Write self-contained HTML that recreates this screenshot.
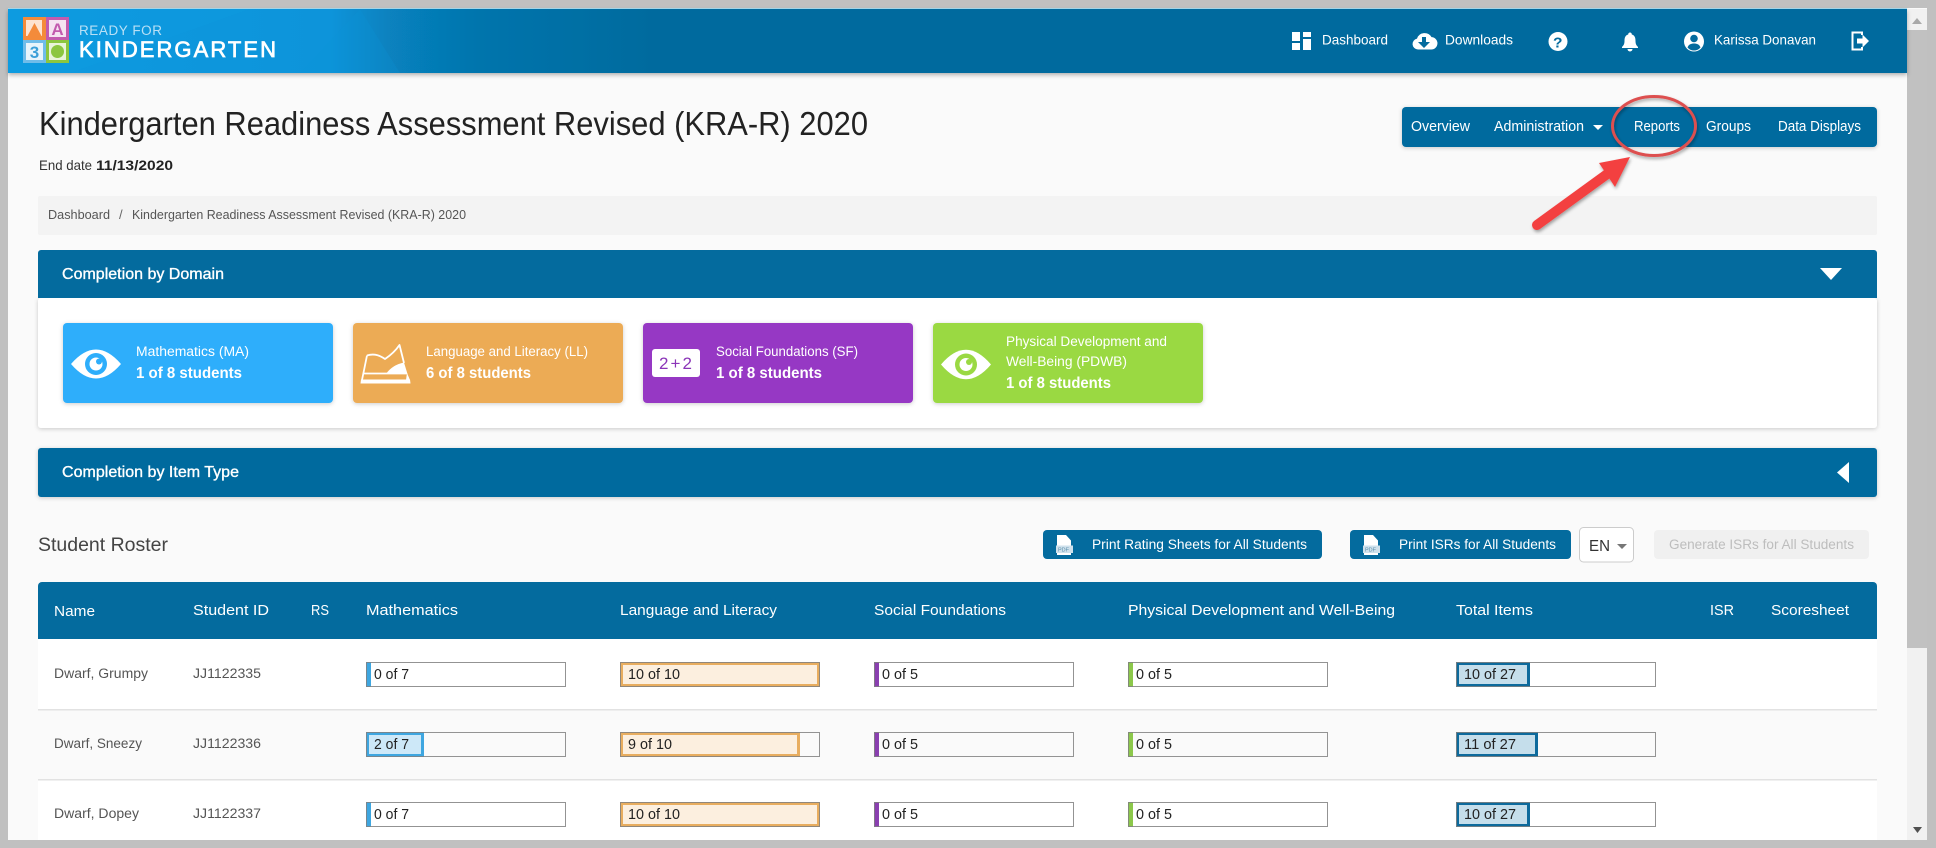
<!DOCTYPE html>
<html lang="en"><head><meta charset="utf-8"><title>Kindergarten Readiness Assessment Revised (KRA-R) 2020</title>
<style>
html,body{margin:0;padding:0;background:#c0c0c0;width:1936px;height:848px;overflow:hidden}
svg{display:block;font-family:"Liberation Sans",Arial,sans-serif}
.w{fill:#fff}
.n{font-size:14px;fill:#fff}
.h{font-size:14.5px;fill:#fff}
.s{font-size:16px;fill:#fff;stroke:#fff;stroke-width:.35px}
.c{font-size:13.5px;fill:#fff}
.b{font-size:16px;fill:#fff;font-weight:bold}
.r{font-size:13.5px;fill:#555}
.p{font-size:14.5px;fill:#222}
.t{font-size:15px;fill:#fff}
.btn{font-size:13.5px;fill:#fff}
</style></head><body>
<svg xmlns="http://www.w3.org/2000/svg" width="1936" height="848" viewBox="0 0 1936 848">
<defs>
<linearGradient id="hg" gradientUnits="userSpaceOnUse" x1="8" y1="0" x2="1907" y2="0"><stop offset="0" stop-color="#0a9ae0"/><stop offset=".17" stop-color="#0a94da"/><stop offset=".2" stop-color="#0782bf"/><stop offset=".25" stop-color="#0574ac"/><stop offset=".34" stop-color="#046b9e"/><stop offset="1" stop-color="#046b9e"/></linearGradient>
<filter id="sh" x="-5%" y="-20%" width="110%" height="150%"><feDropShadow dx="0" dy="2" stdDeviation="2" flood-color="#000" flood-opacity=".3"/></filter>
<filter id="cs" x="-10%" y="-20%" width="120%" height="140%"><feDropShadow dx="0" dy="1" stdDeviation="2" flood-color="#000" flood-opacity=".2"/></filter>
<filter id="rs" x="-20%" y="-20%" width="140%" height="140%"><feDropShadow dx="1" dy="2" stdDeviation="1.500" flood-color="#000" flood-opacity=".35"/></filter>
</defs>

<rect x="8" y="8" width="1919" height="832" fill="#fafafa"/>
<rect x="8" y="8" width="1899" height="1" fill="#a8dcf0"/>

<!-- scrollbar -->
<rect x="1907" y="9" width="20" height="831" fill="#f1f1f1"/>
<rect x="1907" y="30" width="20" height="618" fill="#c1c1c1"/>
<path d="M1917 18l-5 6h10z" fill="#a9a9a9"/>
<path d="M1913 827h9l-4.500 6z" fill="#505050"/>

<!-- header -->
<rect x="8" y="9" width="1899" height="64" fill="url(#hg)" filter="url(#sh)"/>
<path d="M70 73L250 9H8V73Z" fill="#12a2e6" opacity=".18"/>
<path d="M360 9L400 73H300Z" fill="#0a92d6" opacity=".25"/>
<!-- logo -->
<rect x="23" y="17" width="23" height="23" fill="#f48b3a"/><rect x="26" y="20" width="16" height="16" fill="#fde3cf"/><path d="M27.500 36L34.500 23L41.500 36Z" fill="#f48b3a"/>
<rect x="46" y="17" width="23" height="23" fill="#c25bae"/><rect x="49" y="20" width="17" height="17" fill="#f5e3f1"/>
<text x="57.500" y="35" font-size="17" font-weight="bold" fill="#c25bae" text-anchor="middle">A</text>
<rect x="23" y="40" width="23" height="23" fill="#6fbce9"/><rect x="26" y="43" width="17" height="17" fill="#e8f4fb"/>
<text x="34.500" y="58" font-size="17" font-weight="bold" fill="#3b9fd8" text-anchor="middle">3</text>
<rect x="46" y="40" width="23" height="23" fill="#8cc63f"/><rect x="49" y="43" width="17" height="17" fill="#e9f4d8"/><circle cx="57.500" cy="51.500" r="6.500" fill="#8cc63f"/>
<text x="79" y="35" font-size="13.500" fill="#b8e0f6" textLength="83" lengthAdjust="spacing">READY FOR</text>
<text x="79" y="57" font-size="22" fill="#fff" stroke="#fff" stroke-width=".7" textLength="197" lengthAdjust="spacing">KINDERGARTEN</text>

<!-- header right -->
<g class="w">
<rect x="1292" y="32" width="8" height="9"/><rect x="1303" y="32" width="8" height="5"/><rect x="1303" y="39" width="8" height="11"/><rect x="1292" y="43" width="8" height="7"/>
<path d="M1418 49.500a5.500 5.500 0 0 1-1-10.900a8 8 0 0 1 14.500-1.500a6.200 6.200 0 0 1-.5 12.400z"/>
<path d="M1422 37h4v5h4l-6 6-6-6h4z" fill="#046b9e"/>
<circle cx="1558" cy="41.500" r="9.500"/>
<path d="M1630 32.500a1.800 1.800 0 0 1 1.800 2c3 .8 3.700 3.300 3.700 6.500c0 3 1 4.500 2.500 6v1h-16v-1c1.500-1.500 2.500-3 2.500-6c0-3.200.7-5.700 3.700-6.500a1.800 1.800 0 0 1 1.800-2z"/>
<path d="M1627.500 49h5a2.500 2.500 0 0 1-5 0z"/>
<circle cx="1694" cy="41.500" r="10"/>
</g>
<text x="1322" y="44.500" class="n" textLength="66" lengthAdjust="spacingAndGlyphs">Dashboard</text>
<text x="1445" y="44.500" class="n" textLength="68" lengthAdjust="spacingAndGlyphs">Downloads</text>
<text x="1553" y="47.500" font-size="15" font-weight="bold" fill="#046b9e" textLength="9.500" lengthAdjust="spacingAndGlyphs">?</text>
<circle cx="1694" cy="38.500" r="3.800" fill="#046b9e"/>
<path d="M1687.500 47.500c1-3 3.500-4 6.500-4s5.500 1 6.500 4a8.500 8.500 0 0 1-13 0z" fill="#046b9e"/>
<text x="1714" y="44.500" class="n" textLength="102" lengthAdjust="spacingAndGlyphs">Karissa Donavan</text>
<path d="M1862 35v-2.500h-9.500v17h9.500v-2.500" fill="none" stroke="#fff" stroke-width="2"/>
<path d="M1857 38.500h5.500v-4l6.500 6.500-6.500 6.500v-4h-5.500z" fill="#fff"/>

<!-- title -->
<text x="39" y="135" font-size="33" fill="#222" textLength="829" lengthAdjust="spacingAndGlyphs">Kindergarten Readiness Assessment Revised (KRA-R) 2020</text>
<text x="39" y="170" font-size="14" fill="#333" textLength="53" lengthAdjust="spacingAndGlyphs">End date</text>
<text x="96" y="170" font-size="14" font-weight="bold" fill="#222" textLength="77" lengthAdjust="spacingAndGlyphs">11/13/2020</text>

<!-- subnav -->
<rect x="1402" y="107" width="475" height="40" rx="4" fill="#046b9e" filter="url(#cs)"/>
<text x="1411" y="131" class="h" textLength="59" lengthAdjust="spacingAndGlyphs">Overview</text>
<text x="1494" y="131" class="h" textLength="90" lengthAdjust="spacingAndGlyphs">Administration</text>
<path d="M1593 125h10l-5 5z" fill="#fff"/>
<text x="1634" y="131" class="h" textLength="46" lengthAdjust="spacingAndGlyphs">Reports</text>
<text x="1706" y="131" class="h" textLength="45" lengthAdjust="spacingAndGlyphs">Groups</text>
<text x="1778" y="131" class="h" textLength="83" lengthAdjust="spacingAndGlyphs">Data Displays</text>

<!-- breadcrumb -->
<rect x="38" y="196" width="1839" height="39" rx="2" fill="#f3f3f3"/>
<text x="48" y="219" font-size="13" fill="#555" textLength="62" lengthAdjust="spacingAndGlyphs">Dashboard</text>
<text x="119" y="219" font-size="13" fill="#666">/</text>
<text x="132" y="219" font-size="13" fill="#555" textLength="334" lengthAdjust="spacingAndGlyphs">Kindergarten Readiness Assessment Revised (KRA-R) 2020</text>

<!-- annotation -->
<g filter="url(#rs)">
<ellipse cx="1654" cy="126" rx="41.500" ry="29.500" fill="none" stroke="#dd5050" stroke-width="3"/>
<path d="M1537 225L1610 172" stroke="#f34141" stroke-width="10" stroke-linecap="round" fill="none"/>
<path d="M1630 157L1599 163L1615 187Z" fill="#f34141"/>
</g>

<!-- section 1 -->
<rect x="38" y="298" width="1839" height="130" rx="3" fill="#fff" filter="url(#cs)"/>
<path d="M41 250H1874a3 3 0 0 1 3 3V298H38V253a3 3 0 0 1 3-3z" fill="#046b9e"/>
<text x="62" y="279" class="s" textLength="162" lengthAdjust="spacingAndGlyphs">Completion by Domain</text>
<path d="M1820 268h22l-11 12z" fill="#fff"/>

<!-- cards -->
<rect x="63" y="323" width="270" height="80" rx="4" fill="#2eaefb" filter="url(#cs)"/>
<rect x="353" y="323" width="270" height="80" rx="4" fill="#ecab55" filter="url(#cs)"/>
<rect x="643" y="323" width="270" height="80" rx="4" fill="#9639c4" filter="url(#cs)"/>
<rect x="933" y="323" width="270" height="80" rx="4" fill="#9ad943" filter="url(#cs)"/>

<path d="M71 364Q96 335 121 364Q96 393 71 364Z" fill="#fff"/>
<circle cx="96" cy="364" r="11" fill="#2eaefb"/><circle cx="96" cy="364" r="6.500" fill="#fff"/><circle cx="99" cy="361.500" r="3" fill="#2eaefb"/>
<text x="136" y="356" class="c" textLength="113" lengthAdjust="spacingAndGlyphs">Mathematics (MA)</text>
<text x="136" y="378" class="b" textLength="106" lengthAdjust="spacingAndGlyphs">1 of 8 students</text>

<!-- book -->
<path d="M367 355.500Q376 352.500 385 359Q394 353 399.500 345L404 363M367 355.500L362 380" fill="none" stroke="#fff" stroke-width="1.800" stroke-linejoin="round"/>
<path d="M386 374Q392 365 404 362.500L407.500 374Z" fill="#fff"/>
<path d="M363.500 373.500H407" stroke="#fff" stroke-width="1.800" fill="none"/>
<path d="M361 379.500H410L410.500 383.500H360.500Z" fill="#fff"/>
<path d="M407 373L410 380L406 380Z" fill="#fff"/>
<text x="426" y="356" class="c" textLength="162" lengthAdjust="spacingAndGlyphs">Language and Literacy (LL)</text>
<text x="426" y="378" class="b" textLength="105" lengthAdjust="spacingAndGlyphs">6 of 8 students</text>

<rect x="652" y="349" width="48" height="28" rx="3" fill="#fff"/>
<text x="659" y="369" font-size="17" fill="#8b35b8" textLength="33" lengthAdjust="spacing">2+2</text>
<text x="716" y="356" class="c" textLength="142" lengthAdjust="spacingAndGlyphs">Social Foundations (SF)</text>
<text x="716" y="378" class="b" textLength="106" lengthAdjust="spacingAndGlyphs">1 of 8 students</text>

<path d="M941 364.500Q966 335 991 364.500Q966 394 941 364.500Z" fill="#fff"/>
<circle cx="966" cy="364.500" r="11" fill="#9ad943"/><circle cx="966" cy="364.500" r="6.500" fill="#fff"/><circle cx="969" cy="362" r="3" fill="#9ad943"/>
<text x="1006" y="346" class="c" textLength="161" lengthAdjust="spacingAndGlyphs">Physical Development and</text>
<text x="1006" y="366" class="c" textLength="121" lengthAdjust="spacingAndGlyphs">Well-Being (PDWB)</text>
<text x="1006" y="388" class="b" textLength="105" lengthAdjust="spacingAndGlyphs">1 of 8 students</text>

<!-- section 2 -->
<rect x="38" y="448" width="1839" height="49" rx="3" fill="#046b9e" filter="url(#cs)"/>
<text x="62" y="477" class="s" textLength="177" lengthAdjust="spacingAndGlyphs">Completion by Item Type</text>
<path d="M1849 462v21l-12-10.500z" fill="#fff"/>

<!-- roster toolbar -->
<text x="38" y="551" font-size="19.500" fill="#444" textLength="130" lengthAdjust="spacingAndGlyphs">Student Roster</text>

<rect x="1043" y="530" width="279" height="29" rx="4" fill="#046b9e"/>
<path d="M1057 535h9l5 5.500v5h-14zM1057 553h14v2h-14z" fill="#fff"/>
<rect x="1056" y="545.500" width="17" height="7.500" fill="#cfe1ec"/>
<text x="1058" y="551.500" font-size="5.500" fill="#5b8eab">PDF</text>
<text x="1092" y="549" class="btn" textLength="215" lengthAdjust="spacingAndGlyphs">Print Rating Sheets for All Students</text>

<rect x="1350" y="530" width="221" height="29" rx="4" fill="#046b9e"/>
<path d="M1364 535h9l5 5.500v5h-14zM1364 553h14v2h-14z" fill="#fff"/>
<rect x="1363" y="545.500" width="17" height="7.500" fill="#cfe1ec"/>
<text x="1365" y="551.500" font-size="5.500" fill="#5b8eab">PDF</text>
<text x="1399" y="549" class="btn" textLength="157" lengthAdjust="spacingAndGlyphs">Print ISRs for All Students</text>

<rect x="1579.500" y="527.500" width="54" height="34.500" rx="4" fill="#fff" stroke="#ccc"/>
<text x="1589" y="551" font-size="16" fill="#333" textLength="21" lengthAdjust="spacingAndGlyphs">EN</text>
<path d="M1617 544h10l-5 5z" fill="#777"/>

<rect x="1654" y="530" width="215" height="29" rx="4" fill="#f0f0f0"/>
<text x="1669" y="549" font-size="13.500" fill="#bdbdbd" textLength="185" lengthAdjust="spacingAndGlyphs">Generate ISRs for All Students</text>

<!-- table -->
<rect x="38" y="639" width="1839" height="201" fill="#fff"/>
<rect x="38" y="710" width="1839" height="70" fill="#fafafa"/>
<rect x="38" y="709" width="1839" height="1.500" fill="#e2e2e2"/>
<rect x="38" y="779" width="1839" height="1.500" fill="#e2e2e2"/>
<path d="M42 582H1873a4 4 0 0 1 4 4V639H38V586a4 4 0 0 1 4-4z" fill="#046b9e"/>
<text x="54" y="616" class="t" textLength="41" lengthAdjust="spacingAndGlyphs">Name</text>
<text x="193" y="615" class="t" textLength="76" lengthAdjust="spacingAndGlyphs">Student ID</text>
<text x="311" y="615" class="t" textLength="18" lengthAdjust="spacingAndGlyphs">RS</text>
<text x="366" y="615" class="t" textLength="92" lengthAdjust="spacingAndGlyphs">Mathematics</text>
<text x="620" y="615" class="t" textLength="157" lengthAdjust="spacingAndGlyphs">Language and Literacy</text>
<text x="874" y="615" class="t" textLength="132" lengthAdjust="spacingAndGlyphs">Social Foundations</text>
<text x="1128" y="615" class="t" textLength="267" lengthAdjust="spacingAndGlyphs">Physical Development and Well-Being</text>
<text x="1456" y="615" class="t" textLength="77" lengthAdjust="spacingAndGlyphs">Total Items</text>
<text x="1710" y="615" class="t" textLength="24" lengthAdjust="spacingAndGlyphs">ISR</text>
<text x="1771" y="615" class="t" textLength="78" lengthAdjust="spacingAndGlyphs">Scoresheet</text>

<!-- names -->
<text x="54" y="678" class="r" textLength="94" lengthAdjust="spacingAndGlyphs">Dwarf, Grumpy</text>
<text x="193" y="678" class="r" textLength="68" lengthAdjust="spacingAndGlyphs">JJ1122335</text>
<text x="54" y="748" class="r" textLength="88" lengthAdjust="spacingAndGlyphs">Dwarf, Sneezy</text>
<text x="193" y="748" class="r" textLength="68" lengthAdjust="spacingAndGlyphs">JJ1122336</text>
<text x="54" y="818" class="r" textLength="85" lengthAdjust="spacingAndGlyphs">Dwarf, Dopey</text>
<text x="193" y="818" class="r" textLength="68" lengthAdjust="spacingAndGlyphs">JJ1122337</text>

<!-- math -->
<rect x="366" y="662" width="5" height="25" fill="#3ea6e0"/>
<rect x="367.500" y="733.500" width="55" height="22" fill="#cde8f8" stroke="#3ea6e0" stroke-width="3"/>
<rect x="366" y="802" width="5" height="25" fill="#3ea6e0"/>
<!-- lang -->
<rect x="621.500" y="663.500" width="197" height="22" fill="#fcefdf" stroke="#e8ad5f" stroke-width="3"/>
<rect x="621.500" y="733.500" width="177" height="22" fill="#fcefdf" stroke="#e8ad5f" stroke-width="3"/>
<rect x="621.500" y="803.500" width="197" height="22" fill="#fcefdf" stroke="#e8ad5f" stroke-width="3"/>
<!-- social -->
<rect x="874" y="662" width="5" height="25" fill="#8a3fb0"/><rect x="874" y="732" width="5" height="25" fill="#8a3fb0"/><rect x="874" y="802" width="5" height="25" fill="#8a3fb0"/>
<!-- phys -->
<rect x="1128" y="662" width="5" height="25" fill="#8cc84b"/><rect x="1128" y="732" width="5" height="25" fill="#8cc84b"/><rect x="1128" y="802" width="5" height="25" fill="#8cc84b"/>
<!-- total -->
<rect x="1457.500" y="663.500" width="71" height="22" fill="#c5deeb" stroke="#0d6a9c" stroke-width="3"/>
<rect x="1457.500" y="733.500" width="79" height="22" fill="#c5deeb" stroke="#0d6a9c" stroke-width="3"/>
<rect x="1457.500" y="803.500" width="71" height="22" fill="#c5deeb" stroke="#0d6a9c" stroke-width="3"/>

<!-- bar outlines (on top, 1px gray) -->
<g fill="none" stroke="#808080" stroke-opacity=".85">
<rect x="366.500" y="662.500" width="199" height="24"/><rect x="620.500" y="662.500" width="199" height="24"/><rect x="874.500" y="662.500" width="199" height="24"/><rect x="1128.500" y="662.500" width="199" height="24"/><rect x="1456.500" y="662.500" width="199" height="24"/>
<rect x="366.500" y="732.500" width="199" height="24"/><rect x="620.500" y="732.500" width="199" height="24"/><rect x="874.500" y="732.500" width="199" height="24"/><rect x="1128.500" y="732.500" width="199" height="24"/><rect x="1456.500" y="732.500" width="199" height="24"/>
<rect x="366.500" y="802.500" width="199" height="24"/><rect x="620.500" y="802.500" width="199" height="24"/><rect x="874.500" y="802.500" width="199" height="24"/><rect x="1128.500" y="802.500" width="199" height="24"/><rect x="1456.500" y="802.500" width="199" height="24"/>
</g>

<!-- bar labels -->
<text x="374" y="679" class="p" textLength="35" lengthAdjust="spacingAndGlyphs">0 of 7</text>
<text x="628" y="679" class="p" textLength="52" lengthAdjust="spacingAndGlyphs">10 of 10</text>
<text x="882" y="679" class="p" textLength="36" lengthAdjust="spacingAndGlyphs">0 of 5</text>
<text x="1136" y="679" class="p" textLength="36" lengthAdjust="spacingAndGlyphs">0 of 5</text>
<text x="1464" y="679" class="p" textLength="52" lengthAdjust="spacingAndGlyphs">10 of 27</text>
<text x="374" y="749" class="p" textLength="35" lengthAdjust="spacingAndGlyphs">2 of 7</text>
<text x="628" y="749" class="p" textLength="44" lengthAdjust="spacingAndGlyphs">9 of 10</text>
<text x="882" y="749" class="p" textLength="36" lengthAdjust="spacingAndGlyphs">0 of 5</text>
<text x="1136" y="749" class="p" textLength="36" lengthAdjust="spacingAndGlyphs">0 of 5</text>
<text x="1464" y="749" class="p" textLength="52" lengthAdjust="spacingAndGlyphs">11 of 27</text>
<text x="374" y="819" class="p" textLength="35" lengthAdjust="spacingAndGlyphs">0 of 7</text>
<text x="628" y="819" class="p" textLength="52" lengthAdjust="spacingAndGlyphs">10 of 10</text>
<text x="882" y="819" class="p" textLength="36" lengthAdjust="spacingAndGlyphs">0 of 5</text>
<text x="1136" y="819" class="p" textLength="36" lengthAdjust="spacingAndGlyphs">0 of 5</text>
<text x="1464" y="819" class="p" textLength="52" lengthAdjust="spacingAndGlyphs">10 of 27</text>

<!-- bottom clip -->
<rect x="0" y="840" width="1936" height="8" fill="#c0c0c0"/>
</svg>
</body></html>
